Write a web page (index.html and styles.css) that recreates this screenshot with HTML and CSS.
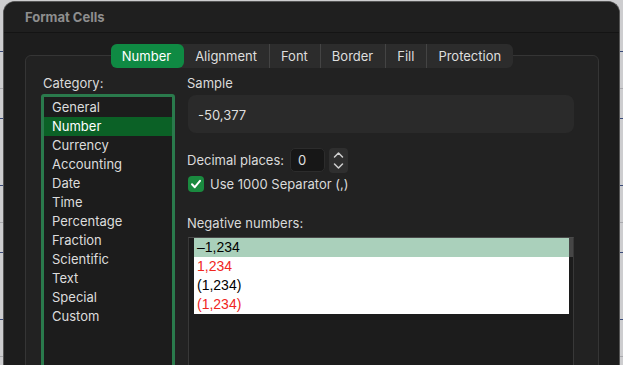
FILE: index.html
```html
<!DOCTYPE html>
<html lang="en">
<head>
    <meta charset="UTF-8">
    <title>Format Cells</title>
    <link rel="stylesheet" href="styles.css">
</head>
<body>
    <div class="window">
        <div class="titlebar">Format Cells</div>

        <div class="panel">
            <div class="tabs">
                <div class="tab active">Number</div>
                <div class="tab">Alignment</div>
                <div class="tab">Font</div>
                <div class="tab">Border</div>
                <div class="tab">Fill</div>
                <div class="tab">Protection</div>
            </div>

            <div class="group">
                <div class="col-left">
                    <div class="label">Category:</div>
                    <div class="category-list">
                        <div class="item">General</div>
                        <div class="item selected">Number</div>
                        <div class="item">Currency</div>
                        <div class="item">Accounting</div>
                        <div class="item">Date</div>
                        <div class="item">Time</div>
                        <div class="item">Percentage</div>
                        <div class="item">Fraction</div>
                        <div class="item">Scientific</div>
                        <div class="item">Text</div>
                        <div class="item">Special</div>
                        <div class="item">Custom</div>
                    </div>
                </div>

                <div class="col-right">
                    <div class="label">Sample</div>
                    <div class="sample">-50,377</div>

                    <div class="decimal-row">
                        <span class="label">Decimal places:</span>
                        <div class="number-input">0</div>
                        <div class="stepper">
                            <svg width="19" height="25" viewBox="0 0 19 25">
                                <path d="M5.5 9 L9.5 5 L13.5 9" fill="none" stroke="#d0d0d0" stroke-width="1.5" stroke-linecap="round" stroke-linejoin="round"/>
                                <path d="M5.5 16 L9.5 20 L13.5 16" fill="none" stroke="#d0d0d0" stroke-width="1.5" stroke-linecap="round" stroke-linejoin="round"/>
                            </svg>
                        </div>
                    </div>

                    <div class="check-row">
                        <div class="checkbox">
                            <svg width="16" height="16" viewBox="0 0 16 16">
                                <path d="M4 8.3 L6.8 11.2 L12 4.8" fill="none" stroke="#fff" stroke-width="2" stroke-linecap="round" stroke-linejoin="round"/>
                            </svg>
                        </div>
                        <span class="label">Use 1000 Separator (,)</span>
                    </div>

                    <div class="label neg-label">Negative numbers:</div>
                    <div class="neg-box">
                        <div class="neg-list">
                            <div class="neg-row neg-selected">–1,234</div>
                            <div class="neg-row red">1,234</div>
                            <div class="neg-row">(1,234)</div>
                            <div class="neg-row red">(1,234)</div>
                        </div>
                        <div class="neg-scroll"></div>
                    </div>
                </div>
            </div>
        </div>
    </div>
</body>
</html>
```

FILE: styles.css
```css
body {
    margin: 0;
    height: 365px;
    overflow: hidden;
    font-family: Inter, "Liberation Sans", sans-serif;
    font-size: 13px;
    background-color: #cdcdcf;
    background-image:
        repeating-linear-gradient(to bottom, transparent 0, transparent 51px, #3a4a78 51px, #3a4a78 52px, transparent 52px, transparent 67px),
        repeating-linear-gradient(to bottom, transparent 0, transparent 88px, #a9a9ad 88px, #a9a9ad 89px, transparent 89px, transparent 134px);
}

.window {
    margin: 1px 3px 0 3px;
    height: 380px;
    background: #1d1d1d;
    border: 1px solid #555;
    border-bottom: none;
    border-radius: 12px 12px 0 0;
    overflow: hidden;
}

.titlebar {
    height: 30px;
    line-height: 31px;
    padding-left: 21px;
    font-weight: 700;
    color: #8e8e8e;
    background: #1f1f1f;
    border-bottom: 1px solid #141414;
}

.panel {
    display: flex;
    flex-direction: column;
    padding: 11px 20px 0 21px;
}

.tabs {
    align-self: center;
    display: flex;
    height: 24px;
    background: #2c2c2c;
    border-radius: 6px;
    margin-bottom: -13px;
    position: relative;
    z-index: 1;
}

.tab {
    padding: 0 12px 0 11px;
    line-height: 24px;
    color: #dedede;
    border-left: 1px solid #444;
}

.tab:first-child,
.tab.active + .tab {
    border-left: none;
}

.tab.active {
    background: #0f8a43;
    color: #fff;
    border-radius: 6px;
    padding: 0 13px 0 11px;
}

.group {
    display: flex;
    gap: 13px;
    height: 340px;
    padding: 19px 24px 0 15px;
    background: #222;
    border: 1px solid #353535;
    border-radius: 6px;
}

.label {
    color: #dadada;
    line-height: 16px;
}

.col-left {
    width: 134px;
    display: flex;
    flex-direction: column;
}

.col-left .label {
    padding-left: 2px;
    margin-bottom: 3px;
}

.category-list {
    height: 300px;
    padding-top: 1px;
    border: 3px solid #2a7a4c;
    border-radius: 3px;
    background: #1c1c1c;
}

.item {
    height: 19px;
    line-height: 19px;
    padding-left: 8px;
    color: #dcdcdc;
}

.item.selected {
    background: #0b6126;
    color: #fff;
}

.col-right {
    flex: 1;
    display: flex;
    flex-direction: column;
}

.col-right > .label {
    margin-left: -1px;
}

.sample {
    margin-top: 4px;
    height: 38px;
    line-height: 40px;
    padding-left: 10px;
    background: #2a2a2a;
    border-radius: 8px;
    color: #dedede;
}

.decimal-row {
    display: flex;
    align-items: center;
    margin-top: 14px;
    margin-left: -1px;
}

.number-input {
    width: 26px;
    height: 22px;
    line-height: 23px;
    padding-left: 7px;
    margin-left: 6px;
    background: #171717;
    border: 1px solid #2c2c2c;
    border-radius: 5px;
    color: #e0e0e0;
}

.stepper {
    width: 19px;
    height: 25px;
    margin-left: 4px;
    margin-top: 1px;
    background: #2f2f2f;
    border-radius: 4px;
}

.stepper svg {
    display: block;
}

.check-row {
    display: flex;
    align-items: center;
    gap: 6px;
    margin-top: 3px;
}

.checkbox {
    width: 16px;
    height: 16px;
    background: #1a8a3f;
    border-radius: 4px;
}

.checkbox svg {
    display: block;
}

.neg-label {
    margin-top: 23px;
}

.neg-box {
    margin-top: 6px;
    height: 140px;
    display: flex;
    padding-left: 5px;
    border: 1px solid #383838;
    border-top-color: #4a4a4a;
    background: #1c1c1c;
    font-family: "Liberation Sans", Arial, sans-serif;
    font-size: 14px;
}

.neg-list {
    flex: 1;
    align-self: flex-start;
    background: #fff;
}

.neg-row {
    height: 19px;
    line-height: 19px;
    padding-left: 3px;
    color: #000;
}

.neg-row.red {
    color: #f0261e;
}

.neg-row.neg-selected {
    background: #aad0bb;
}

.neg-scroll {
    width: 4px;
    height: 19px;
    background: #464646;
}
```
